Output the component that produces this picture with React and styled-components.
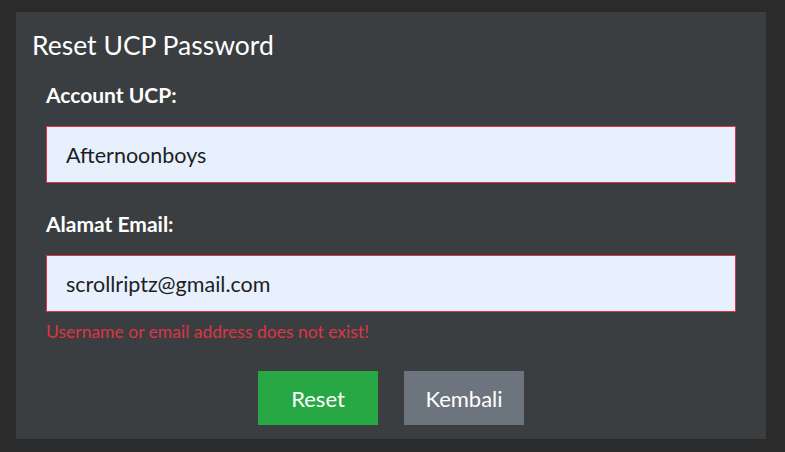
import React from "react";
import styled, { createGlobalStyle } from "styled-components";

const GlobalStyle = createGlobalStyle`
  html, body {
    margin: 0;
    padding: 0;
    background: #2b2b2b;
  }
  body {
    font-family: Lato, "Open Sans", sans-serif;
  }
`;

const Page = styled.div`
  width: 785px;
  height: 452px;
  padding: 12px 19px 13px 16px;
  box-sizing: border-box;
`;

const Panel = styled.div`
  height: 100%;
  background: #3b3e41;
  box-sizing: border-box;
  padding: 16px 30px 0 16px;
`;

const Title = styled.h2`
  margin: 0;
  font-size: 26.5px;
  font-weight: 400;
  line-height: 34px;
  color: #ffffff;
`;

const Form = styled.form`
  padding-left: 14px;
  margin-top: 19px;
`;

const Label = styled.label`
  display: block;
  font-size: 21px;
  font-weight: 700;
  line-height: 27px;
  color: #ffffff;
`;

const Field = styled.div`
  margin-bottom: ${(p) => p.$gap}px;
`;

const Input = styled.input`
  display: block;
  width: 100%;
  height: 57px;
  margin-top: 18px;
  box-sizing: border-box;
  padding: 0 19px;
  background: #e8f0fe;
  border: 1px solid ${(p) => (p.$invalid ? "#dc3545" : "#ced4da")};
  border-radius: 0;
  font-family: inherit;
  font-size: 21.5px;
  color: #1b1f23;
  outline: none;
`;

const ErrorText = styled.div`
  margin-top: 10px;
  font-size: 17.5px;
  line-height: 20px;
  color: #dc3545;
`;

const Actions = styled.div`
  display: flex;
  justify-content: center;
  gap: 26px;
  margin-top: 29px;
  margin-left: -14px;
  margin-right: -14px;
`;

const Button = styled.button`
  width: 120px;
  height: 54px;
  border: none;
  border-radius: 0;
  background: ${(p) => (p.$variant === "success" ? "#28a745" : "#6c757d")};
  color: #ffffff;
  font-family: inherit;
  font-size: 22px;
  cursor: pointer;
`;

export default function App() {
  return (
    <>
      <GlobalStyle />
      <Page>
        <Panel>
          <Title>Reset UCP Password</Title>
          <Form onSubmit={(e) => e.preventDefault()}>
            <Field $gap={27}>
              <Label>Account UCP:</Label>
              <Input $invalid defaultValue="Afternoonboys" />
            </Field>
            <Field $gap={0}>
              <Label>Alamat Email:</Label>
              <Input $invalid defaultValue="scrollriptz@gmail.com" />
              <ErrorText>Username or email address does not exist!</ErrorText>
            </Field>
            <Actions>
              <Button type="submit" $variant="success">Reset</Button>
              <Button type="button" $variant="secondary">Kembali</Button>
            </Actions>
          </Form>
        </Panel>
      </Page>
    </>
  );
}
